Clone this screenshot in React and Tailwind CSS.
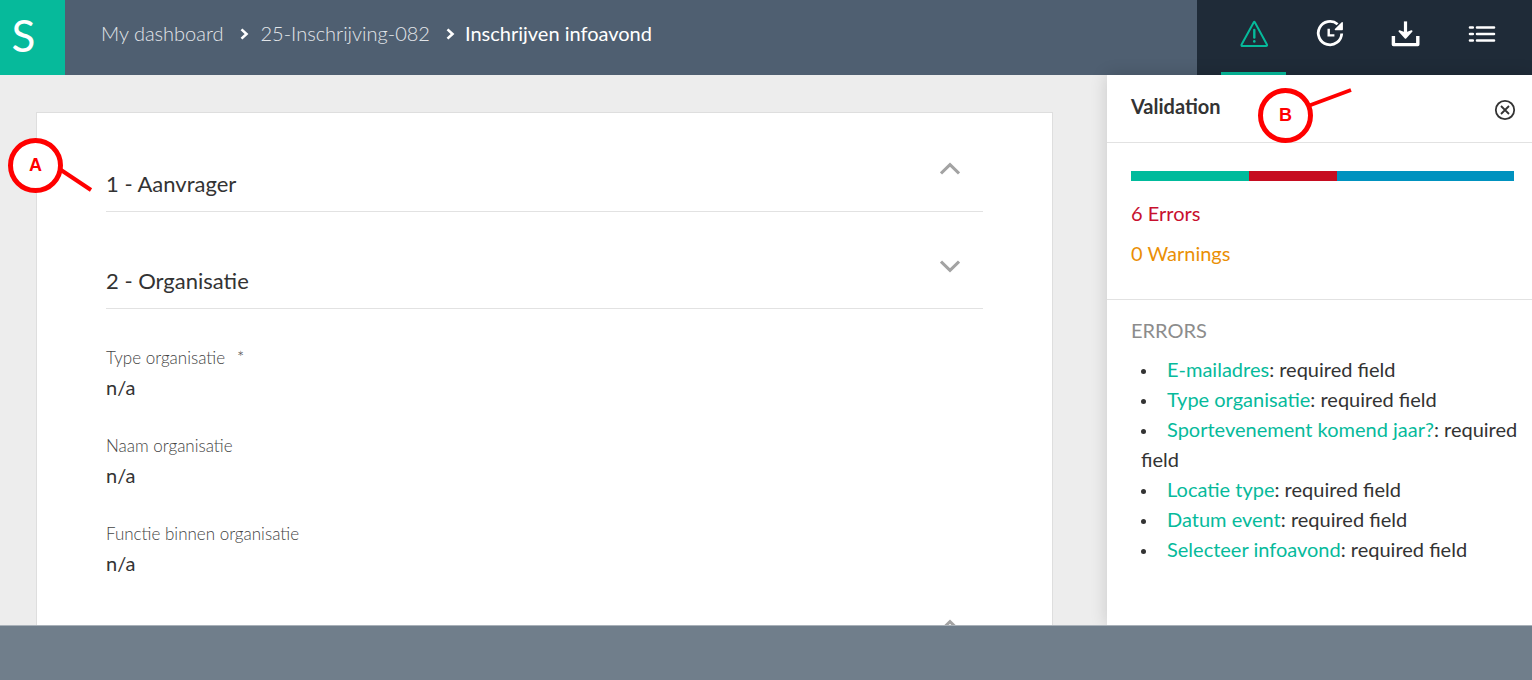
import { useState } from "react";

const tabs = [
  { id: "validation", label: "Validation", Icon: WarningIcon },
  { id: "history", label: "History", Icon: HistoryIcon },
  { id: "download", label: "Download", Icon: DownloadIcon },
  { id: "list", label: "List", Icon: ListIcon },
];

const fields = [
  { label: "Type organisatie", value: "n/a", required: true },
  { label: "Naam organisatie", value: "n/a" },
  { label: "Functie binnen organisatie", value: "n/a" },
];

const errors = [
  "E-mailadres",
  "Type organisatie",
  "Sportevenement komend jaar?",
  "Locatie type",
  "Datum event",
  "Selecteer infoavond",
];

function WarningIcon() {
  return (
    <svg width="30" height="30" viewBox="0 0 30 30" fill="none" stroke="currentColor" strokeWidth="2" strokeLinejoin="round" strokeLinecap="round">
      <path d="M14.8 3.2 L2.6 25.4 Q2 27 3.6 27 H27 Q28.6 27 27.9 25.4 L15.8 3.2 Q15.3 2.4 14.8 3.2 Z" />
      <path d="M15.3 11 V18.6" strokeWidth="2.4" />
      <path d="M15.3 22.2 V22.4" strokeWidth="2.6" />
    </svg>
  );
}

function HistoryIcon() {
  return (
    <svg width="30" height="30" viewBox="0 0 30 30" fill="none" stroke="currentColor" strokeWidth="2.8">
      <path d="M26.7 14.5 A11.7 11.7 0 1 1 22.6 5.2" />
      <path d="M27.2 3.8 V10.6 H20.4 Z" fill="currentColor" strokeWidth="1.4" strokeLinejoin="round" />
      <path d="M13.7 9.8 V16.4 H19.4" strokeWidth="2.4" />
    </svg>
  );
}

function DownloadIcon() {
  return (
    <svg width="30" height="30" viewBox="0 0 30 30" fill="none" stroke="currentColor">
      <path d="M2.4 17 V25.6 H26.8 V17" strokeWidth="3.4" strokeLinejoin="round" />
      <path d="M14.5 2.4 V15" strokeWidth="3.2" />
      <path d="M8.4 12.2 L14.5 18.8 L20.6 12.2 L14.5 14.4 Z" fill="currentColor" strokeWidth="1.8" strokeLinejoin="round" />
    </svg>
  );
}

function ListIcon() {
  return (
    <svg width="30" height="30" viewBox="0 0 30 30" fill="none" stroke="currentColor" strokeWidth="2.6" strokeLinecap="round">
      <path d="M3 8.5 H5.8 M10 8.5 H27" />
      <path d="M3 15 H5.8 M10 15 H27" />
      <path d="M3 21.5 H5.8 M10 21.5 H27" />
    </svg>
  );
}

function Separator() {
  return (
    <svg width="9" height="12" viewBox="0 0 9 12" fill="none" stroke="white" strokeWidth="2.6">
      <path d="M1.5 1.4 L6.5 6 L1.5 10.6" />
    </svg>
  );
}

function Section({ title, open, onToggle }) {
  return (
    <div className="flex h-[97px] items-end justify-between border-b border-[#e2e2e2]">
      <h2 className="pb-[11px] text-[22px] leading-8">{title}</h2>
      <button aria-label="Toggle section" onClick={onToggle} className="mb-8 mr-[23px] text-[#a3a3a3]">
        <svg width="20" height="20" viewBox="0 0 20 20" fill="none" stroke="currentColor" strokeWidth="3">
          <path d={open ? "M1 5.6 L10 14.4 L19 5.6" : "M1 14.4 L10 5.6 L19 14.4"} />
        </svg>
      </button>
    </div>
  );
}

function Callout({ letter, className, line }) {
  return (
    <div className={`pointer-events-none absolute size-[55px] ${className}`}>
      <svg className="absolute inset-0 overflow-visible" width="55" height="55" stroke="#f00">
        <path d={line} strokeWidth="4" />
        <circle cx="27.5" cy="27.5" r="25" fill="white" strokeWidth="5" />
      </svg>
      <span className="relative flex h-full items-center justify-center pb-0.5 font-['Liberation_Sans',Arial,sans-serif] text-lg font-bold text-[#f00]">
        {letter}
      </span>
    </div>
  );
}

function App() {
  const [tab, setTab] = useState("validation");
  const [open, setOpen] = useState(true);
  const [panel, setPanel] = useState(true);

  return (
    <div className="relative flex h-screen flex-col overflow-hidden bg-[#ededed] font-[Lato,sans-serif] text-[#333]">
      <header className="flex h-[75px] shrink-0 bg-[#4f5f71]">
        <a href="#home" className="flex w-[65px] items-center justify-center bg-[#06ba9b] pb-1.5 pr-[18px] text-[44px] leading-none text-white">
          S
        </a>
        <nav className="flex flex-1 items-center pb-2.5 pl-9 text-xl font-light text-[#e3e6ea]">
          <a href="#dashboard">My dashboard</a>
          <span className="pl-4 pr-3 pt-0.5">
            <Separator />
          </span>
          <a href="#dossier">25-Inschrijving-082</a>
          <span className="pl-4 pr-2.5 pt-0.5">
            <Separator />
          </span>
          <span className="font-normal text-white">Inschrijven infoavond</span>
        </nav>
        <div className="flex w-[335px] justify-between bg-[#1f2b38] pl-6 pr-[17px]">
          {tabs.map(({ id, label, Icon }) => (
            <button
              key={id}
              aria-label={label}
              onClick={() => {
                setTab(id);
                setPanel(true);
              }}
              className={`flex w-[65px] items-center justify-center border-b-3 pb-1 ${
                tab === id ? "border-[#06ba9b] text-[#06ba9b]" : "border-transparent text-white"
              }`}
            >
              <Icon />
            </button>
          ))}
        </div>
      </header>

      <div className="flex min-h-0 flex-1">
        <main className="flex min-w-0 flex-1 overflow-hidden pl-9 pr-[54px] pt-[37px]">
          <div className="flex h-fit flex-1 flex-col border border-[#dedede] bg-white px-[69px] pb-10 pt-0.5">
            <Section title="1 - Aanvrager" />
            <Section title="2 - Organisatie" open={open} onToggle={() => setOpen(!open)} />
            {open && (
              <dl className="h-[263px] pt-[35px]">
                {fields.map((field) => (
                  <div key={field.label} className="h-[88px]">
                    <dt className="text-[17px] font-light leading-7 text-[#444]">
                      {field.label}
                      {field.required && <span className="pl-3">*</span>}
                    </dt>
                    <dd className="text-xl leading-[30px]">{field.value}</dd>
                  </div>
                ))}
              </dl>
            )}
            <Section />
          </div>
        </main>

        {panel && (
          <aside className="w-[425px] shrink-0 bg-white text-xl shadow-[0_0_16px_rgba(0,0,0,0.16)]">
            <div className="flex h-[68px] items-center justify-between border-b border-[#e2e2e2] pl-6 pr-4">
              <h3 className="pb-1.5 font-bold">Validation</h3>
              <button aria-label="Close" onClick={() => setPanel(false)} className="pt-0.5">
                <svg width="22" height="22" viewBox="0 0 22 22" fill="none" stroke="#333" strokeWidth="1.8">
                  <circle cx="11" cy="11" r="9.2" />
                  <path d="M7 7 L15 15 M15 7 L7 15" />
                </svg>
              </button>
            </div>
            <div className="border-b border-[#e2e2e2] pb-[31px] pl-6 pr-[18px] pt-7">
              <div className="flex h-2.5">
                <div className="grow-[118] bg-[#00bb9c]" />
                <div className="grow-[88] bg-[#c60c20]" />
                <div className="grow-[177] bg-[#0092bf]" />
              </div>
              <p className="pt-[17px] leading-[30px] text-[#c8102e]">6 Errors</p>
              <p className="pt-2.5 leading-[30px] text-[#ea8f06]">0 Warnings</p>
            </div>
            <div className="pl-6 pr-2 pt-[15px] leading-[30px]">
              <h4 className="text-[#8c8c8c]">ERRORS</h4>
              <ul className="pl-2.5 pt-[9px]">
                {errors.map((name) => (
                  <li key={name}>
                    <span className="inline-block w-[26px] align-middle">
                      <span className="block size-[5px] rounded-full bg-[#333]" />
                    </span>
                    <a href="#field" className="text-[#06ba9b]">
                      {name}
                    </a>
                    : required field
                  </li>
                ))}
              </ul>
            </div>
          </aside>
        )}
      </div>

      <footer className="h-[55px] shrink-0 border-t border-[#a9b1b9] bg-[#707e8b]" />

      <Callout letter="A" className="left-2 top-[138px]" line="M50 30 L83 52" />
      <Callout letter="B" className="right-[219px] top-[88px]" line="M50 18 L93 2" />
    </div>
  );
}

export default App;
